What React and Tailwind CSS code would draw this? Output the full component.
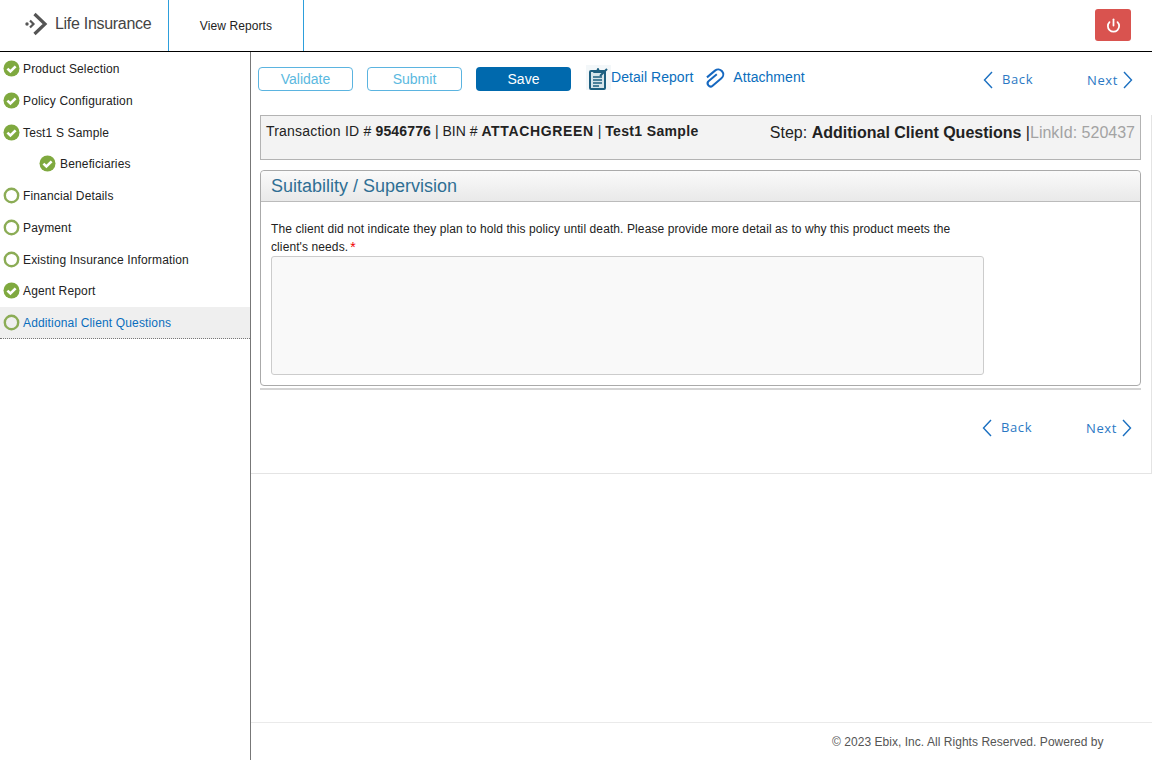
import React from "react";
import { Power } from "lucide-react";

const steps = [
  { label: "Product Selection", done: true, height: "h-[32px]", nudge: true },
  { label: "Policy Configuration", done: true, height: "h-[32px]", nudge: true },
  { label: "Test1 S Sample", done: true, height: "h-[32px]", nudge: true },
  { label: "Beneficiaries", done: true, child: true, height: "h-[31px]" },
  { label: "Financial Details", height: "h-[32px]", nudge: true },
  { label: "Payment", height: "h-[32px]", nudge: true },
  { label: "Existing Insurance Information", height: "h-[32px]", nudge: true },
  { label: "Agent Report", done: true, height: "h-[32px] pb-[1px]" },
  { label: "Additional Client Questions", active: true, height: "h-[32px]" },
];

const StepIcon = ({ done }) =>
  done ? (
    <svg width="17" height="17" viewBox="0 0 17 17" className="shrink-0">
      <circle cx="8.5" cy="8.5" r="8" fill="#7fa93f" />
      <path d="M4.4 8.6l3 2.9 5.2-5.2" fill="none" stroke="#fff" strokeWidth="2.6" />
    </svg>
  ) : (
    <svg width="17" height="17" viewBox="0 0 17 17" className="shrink-0">
      <circle cx="8.5" cy="8.5" r="6.7" fill="none" stroke="#8bac55" strokeWidth="2.4" />
    </svg>
  );

const Logo = () => (
  <svg width="24" height="24" viewBox="0 0 24 24" className="shrink-0 overflow-visible">
    <circle cx="3" cy="12" r="1.7" fill="#555" />
    <path d="M6 8.5L9.5 12 6 15.5" fill="none" stroke="#555" strokeWidth="2.2" />
    <path d="M10.5 2L21 12 10.5 22" fill="none" stroke="#555" strokeWidth="3.2" />
  </svg>
);

const ClipboardIcon = () => (
  <span className="flex h-[25px] w-[25px] items-center justify-center bg-[#f3f7f9]">
    <svg width="21" height="24" viewBox="0 0 21 24">
      <rect x="2" y="5" width="15" height="18" rx="1" fill="#d5e4ea" stroke="#1d5f80" strokeWidth="2" />
      <path d="M5 7l1.5-3h2l1-2h1l1 2h2L15 7z" fill="#1d5f80" />
      <path d="M5 11h9M5 14h9M5 17h9M5 20h6" stroke="#1d5f80" strokeWidth="1.4" />
      <path d="M12 10l7-7" stroke="#1d5f80" strokeWidth="2" />
    </svg>
  </span>
);

const AttachIcon = () => (
  <svg width="20" height="20" viewBox="0 0 20 20" className="shrink-0 overflow-visible">
    <path
      d="M5 15V4.5a5 5 0 0 1 10 0V16a3 3 0 0 1-6 0V5.5"
      transform="rotate(50 10 10)"
      fill="none"
      stroke="#1668c0"
      strokeWidth="2"
    />
  </svg>
);

const ArrowLeft = () => (
  <svg width="10" height="18" viewBox="0 0 10 18" className="shrink-0">
    <path d="M9 1L1.5 9 9 17" fill="none" stroke="#1a6fc0" strokeWidth="1.4" />
  </svg>
);

const ArrowRight = () => (
  <svg width="10" height="18" viewBox="0 0 10 18" className="shrink-0">
    <path d="M1 1l7.5 8L1 17" fill="none" stroke="#1a6fc0" strokeWidth="1.4" />
  </svg>
);

const BackNext = () => (
  <div className="flex items-center font-['Open_Sans',sans-serif] text-[13px] tracking-[0.6px] text-[#2a78c4]">
    <ArrowLeft />
    <span className="ml-[9px] w-[85px]">Back</span>
    <span className="w-[36px] translate-y-[1px]">Next</span>
    <ArrowRight />
  </div>
);

export default function App() {
  return (
    <div className="flex h-[760px] w-[1152px] flex-col overflow-hidden bg-white font-['Liberation_Sans',Arial,sans-serif] text-[#222]">
      {/* Header */}
      <header className="flex h-[52px] shrink-0 items-stretch border-b border-black">
        <div className="flex w-[168px] items-center pb-[4px] pl-[24px]">
          <Logo />
          <span className="ml-[7px] text-[16px] tracking-[-0.3px] text-[#444]">Life Insurance</span>
        </div>
        <div className="flex w-[136px] items-center justify-center border-x border-[#2d9fdc] text-[12px] tracking-[0.1px]">
          View Reports
        </div>
        <div className="ml-auto mr-[21px] mt-[9px]">
          <button className="flex h-[32px] w-[36px] items-center justify-center rounded-[3px] bg-[#d9534f] text-white">
            <Power size={15} strokeWidth={2.8} />
          </button>
        </div>
      </header>

      <div className="flex min-h-0 flex-1">
        {/* Sidebar */}
        <aside className="w-[251px] shrink-0 border-r border-[#777]">
          {steps.map((s) => (
            <div
              key={s.label}
              className={`flex items-center text-[12px] tracking-[0.15px] ${s.height} ${
                s.active ? "border-b border-dotted border-[#777] bg-[#efefef] text-[#0a6ebd]" : ""
              } ${s.child ? "pl-[39px]" : "pl-[3px]"}`}
            >
              <StepIcon done={s.done} />
              <span className={`${s.child ? "ml-[4px]" : "ml-[3px]"} ${s.nudge ? "translate-y-[1px]" : ""}`}>
                {s.label}
              </span>
            </div>
          ))}
        </aside>

        {/* Main */}
        <main className="flex min-w-0 flex-1 flex-col">
          <div className="flex h-[63px] shrink-0 items-start pl-[7px] pt-[15px]">
            <button className="h-[24px] w-[95px] rounded-[4px] border border-[#5bb4e0] text-[14px] text-[#5bb9e0]">
              Validate
            </button>
            <button className="ml-[14px] h-[24px] w-[95px] rounded-[4px] border border-[#5bb4e0] text-[14px] text-[#5bb9e0]">
              Submit
            </button>
            <button className="ml-[14px] h-[24px] w-[95px] rounded-[4px] bg-[#0069ad] text-[14px] text-white">
              Save
            </button>
            <div className="ml-[15px] -mt-[2px] flex items-center text-[14px] tracking-[0.05px] text-[#0a6ebd]">
              <ClipboardIcon />
              <span>Detail Report</span>
              <span className="ml-[11px]">
                <AttachIcon />
              </span>
              <span className="ml-[9px]">Attachment</span>
            </div>
            <div className="ml-auto mr-[19px] mt-[3px]">
              <BackNext />
            </div>
          </div>

          <div className="flex h-[359px] shrink-0 flex-col border-b border-r border-[#e4e4e4] pl-[9px] pr-[10px]">
            {/* Transaction bar */}
            <div className="flex h-[45px] shrink-0 items-start justify-between border border-[#b3b3b3] bg-[#f3f3f3] px-[5px] pt-[5px] text-[14px]">
              <span>
                <span className="tracking-[0.2px]">Transaction ID # </span>
                <b className="tracking-[0.15px]">9546776</b> | BIN # <b className="tracking-[0.65px]">ATTACHGREEN</b> | <b className="tracking-[0.35px]">Test1 Sample</b>
              </span>
              <span className="pt-[2px] text-[16px] leading-[20px]">
                Step: <b>Additional Client Questions</b> |<span className="text-[#a3a3a3]">LinkId: 520437</span>
              </span>
            </div>

            {/* Panel */}
            <section className="mt-[10px] flex h-[216px] shrink-0 flex-col rounded-[4px] border border-[#aaa]">
              <div className="flex h-[31px] shrink-0 items-center rounded-t-[4px] border-b border-[#bbb] bg-gradient-to-b from-[#fafafa] to-[#e9e9e9] pl-[10px] text-[18px] text-[#2f6f94]">
                Suitability / Supervision
              </div>
              <div className="px-[10px] pt-[18px] text-[12px] leading-[18px] tracking-[0.1px]">
                <p>The client did not indicate they plan to hold this policy until death. Please provide more detail as to why this product meets the</p>
                <div className="flex">
                  <span>client's needs.</span>
                  <span className="ml-[2px] text-[14px] leading-[18px] text-[#f00000]">*</span>
                </div>
                <div className="h-[119px] w-[713px] rounded-[3px] border border-[#ccc] bg-[#f9f9f9]" />
              </div>
            </section>

            <div className="mt-[2px] h-[2px] shrink-0 bg-[#d4d4d4]" />
            <div className="mr-[9px] mt-[28px] flex justify-end">
              <BackNext />
            </div>
          </div>

          <div className="flex-1" />

          {/* Footer */}
          <footer className="flex h-[38px] shrink-0 items-center border-t border-[#eaeaea] pl-[581px] text-[12px] tracking-[0.04px] text-[#555]">
            © 2023 Ebix, Inc. All Rights Reserved. Powered by
          </footer>
        </main>
      </div>
    </div>
  );
}
